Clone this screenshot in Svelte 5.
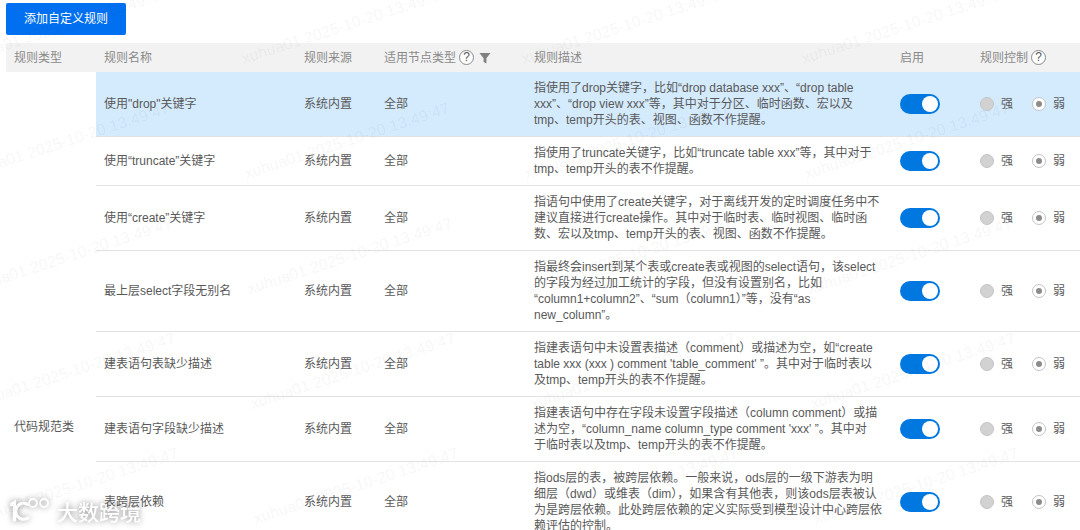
<script>
  const rows = [
    { name: '使用"drop"关键字', active: true, desc: ['指使用了drop关键字，比如“drop database xxx”、“drop table', 'xxx”、“drop view xxx”等，其中对于分区、临时函数、宏以及', 'tmp、temp开头的表、视图、函数不作提醒。'] },
    { name: '使用“truncate”关键字', desc: ['指使用了truncate关键字，比如“truncate table xxx”等，其中对于', 'tmp、temp开头的表不作提醒。'] },
    { name: '使用“create”关键字', desc: ['指语句中使用了create关键字，对于离线开发的定时调度任务中不', '建议直接进行create操作。其中对于临时表、临时视图、临时函', '数、宏以及tmp、temp开头的表、视图、函数不作提醒。'] },
    { name: '最上层select字段无别名', desc: ['指最终会insert到某个表或create表或视图的select语句，该select', '的字段为经过加工统计的字段，但没有设置别名，比如', '“column1+column2”、“sum（column1）”等，没有“as', 'new_column”。'] },
    { name: '建表语句表缺少描述', desc: ['指建表语句中未设置表描述（comment）或描述为空，如“create', "table xxx (xxx ) comment 'table_comment' ”。其中对于临时表以", '及tmp、temp开头的表不作提醒。'] },
    { name: '建表语句字段缺少描述', desc: ['指建表语句中存在字段未设置字段描述（column comment）或描', "述为空，“column_name column_type comment 'xxx' ”。其中对", '于临时表以及tmp、temp开头的表不作提醒。'] },
    { name: '表跨层依赖', desc: ['指ods层的表，被跨层依赖。一般来说，ods层的一级下游表为明', '细层（dwd）或维表（dim），如果含有其他表，则该ods层表被认', '为是跨层依赖。此处跨层依赖的定义实际受到模型设计中心跨层依', '赖评估的控制。'] }
  ];
  const marks = [];
  for (let r = 0; r < 6; r++) {
    for (let c = 0; c < 5; c++) {
      marks.push({ x: 166 + c * 280 - 280 + r * 3, y: r * 115 - 16 });
    }
  }
</script>

<div class="page">
  <div class="brand" aria-hidden="true">
    <svg viewBox="0 0 44 28" width="44" height="28" fill="none" stroke="#fff" stroke-linecap="round">
      <path d="M3.5 7.5 L6.5 5.5 V23" stroke-width="3.5" />
      <path d="M20 7.5 A8 8 0 1 0 20 21" stroke-width="3" />
      <circle cx="25" cy="6" r="4" stroke-width="1.8" />
      <circle cx="36" cy="6" r="4" stroke-width="1.8" />
    </svg>
    <span class="brand-text">大数跨境</span>
  </div>

  <button class="add">添加自定义规则</button>
  <table>
    <colgroup>
      <col class="c-type" /><col class="c-name" /><col class="c-src" /><col class="c-node" /><col class="c-desc" /><col class="c-on" /><col class="c-ctl" />
    </colgroup>
    <thead>
      <tr>
        <th>规则类型</th>
        <th>规则名称</th>
        <th>规则来源</th>
        <th>
          <span class="head">适用节点类型 <span class="help">?</span>
            <svg class="filter" viewBox="0 0 12 12" width="12" height="12"><path d="M0.5 1h11L7.4 6.2V11.5L4.6 10V6.2z" fill="#808080" /></svg>
          </span>
        </th>
        <th>规则描述</th>
        <th>启用</th>
        <th><span class="head">规则控制 <span class="help">?</span></span></th>
      </tr>
    </thead>
    <tbody>
      {#each rows as row, i}
        <tr class:active={row.active}>
          {#if i === 0}
            <td class="type" rowspan={rows.length}>代码规范类</td>
          {/if}
          <td>{row.name}</td>
          <td>系统内置</td>
          <td>全部</td>
          <td class="desc">
            {#each row.desc as line}<span class="line">{line}</span>{/each}
          </td>
          <td><span class="toggle"><span class="knob"></span></span></td>
          <td>
            <span class="ctl">
              <span class="radio off"></span><span class="lab first">强</span>
              <span class="radio on"></span><span class="lab">弱</span>
            </span>
          </td>
        </tr>
      {/each}
    </tbody>
  </table>

  <div class="marks" aria-hidden="true">
    {#each marks as m}
      <span class="mark" style="left:{m.x}px;top:{m.y}px">xuhua01 2025-10-20 13:49:47</span>
    {/each}
  </div>
</div>

<style>
  :global(body) {
    margin: 0;
    background: #fff;
  }
  .page {
    position: relative;
    width: 1080px;
    height: 530px;
    overflow: hidden;
    font-family: "Liberation Sans", "Noto Sans CJK SC", sans-serif;
    font-size: 12px;
    line-height: 16px;
    color: #595959;
  }
  .add {
    display: block;
    position: relative;
    margin: 3px 0 8px 6px;
    width: 120px;
    height: 32px;
    border: 0;
    border-radius: 2px;
    background: #0070f0;
    color: #fff;
    font: inherit;
  }
  table {
    position: relative;
    margin-left: 6px;
    width: 1074px;
    border-collapse: separate;
    border-spacing: 0;
    table-layout: fixed;
  }
  .c-type { width: 90px; }
  .c-name { width: 200px; }
  .c-src { width: 80px; }
  .c-node { width: 150px; }
  .c-desc { width: 366px; }
  .c-on { width: 80px; }
  .c-ctl { width: 108px; }
  th {
    height: 29px;
    padding: 0 8px;
    background: #f2f2f2;
    color: #8a8a8a;
    font-weight: 400;
    text-align: left;
    white-space: nowrap;
  }
  td {
    padding: 8px;
    border-bottom: 1px solid #e2e2e2;
    white-space: nowrap;
  }
  td.type {
    padding: 347px 8px 0;
    border-bottom: 0;
    vertical-align: top;
  }
  .active td:not(.type) {
    background: #d4eafd;
  }
  .line {
    display: block;
  }
  .head {
    display: inline-flex;
    align-items: center;
    gap: 3px;
  }
  .help {
    display: inline-block;
    box-sizing: border-box;
    width: 15px;
    height: 15px;
    border: 1px solid #8a8a8a;
    border-radius: 50%;
    background: #fff;
    color: #555;
    font-size: 12px;
    line-height: 13px;
    text-align: center;
  }
  .filter {
    margin-left: 2px;
  }
  .toggle {
    display: block;
    position: relative;
    width: 40px;
    height: 20px;
    border-radius: 10px;
    background: #0078e0;
  }
  .knob {
    position: absolute;
    right: 2px;
    top: 2px;
    width: 16px;
    height: 16px;
    border-radius: 50%;
    background: #fff;
  }
  .ctl {
    display: flex;
    align-items: center;
  }
  .radio {
    box-sizing: border-box;
    width: 14px;
    height: 14px;
    border-radius: 50%;
    border: 1px solid #c4c4c4;
    display: grid;
    place-items: center;
  }
  .radio.off {
    background: #d2d2d2;
  }
  .radio.on {
    background: #fff;
  }
  .radio.on::after {
    content: "";
    width: 6px;
    height: 6px;
    border-radius: 50%;
    background: #8c8c8c;
  }
  .lab {
    margin-left: 7px;
  }
  .lab.first {
    margin-right: 19px;
  }
  .marks {
    position: absolute;
    inset: 0;
    pointer-events: none;
  }
  .mark {
    position: absolute;
    transform-origin: right center;
    transform: translateX(-100%) rotate(-18deg);
    font-size: 16px;
    line-height: 18px;
    white-space: nowrap;
    color: rgba(0, 0, 0, 0.055);
  }
  .brand {
    position: absolute;
    left: 8px;
    bottom: 5px;
    display: flex;
    align-items: center;
    gap: 5px;
    filter: drop-shadow(0 0 3px rgba(0, 0, 0, 0.45));
  }
  .brand svg {
    overflow: visible;
  }
  .brand-text {
    color: #fff;
    font-family: "Noto Sans CJK SC", sans-serif;
    font-size: 21px;
    line-height: 28px;
    font-weight: 500;
  }
</style>
